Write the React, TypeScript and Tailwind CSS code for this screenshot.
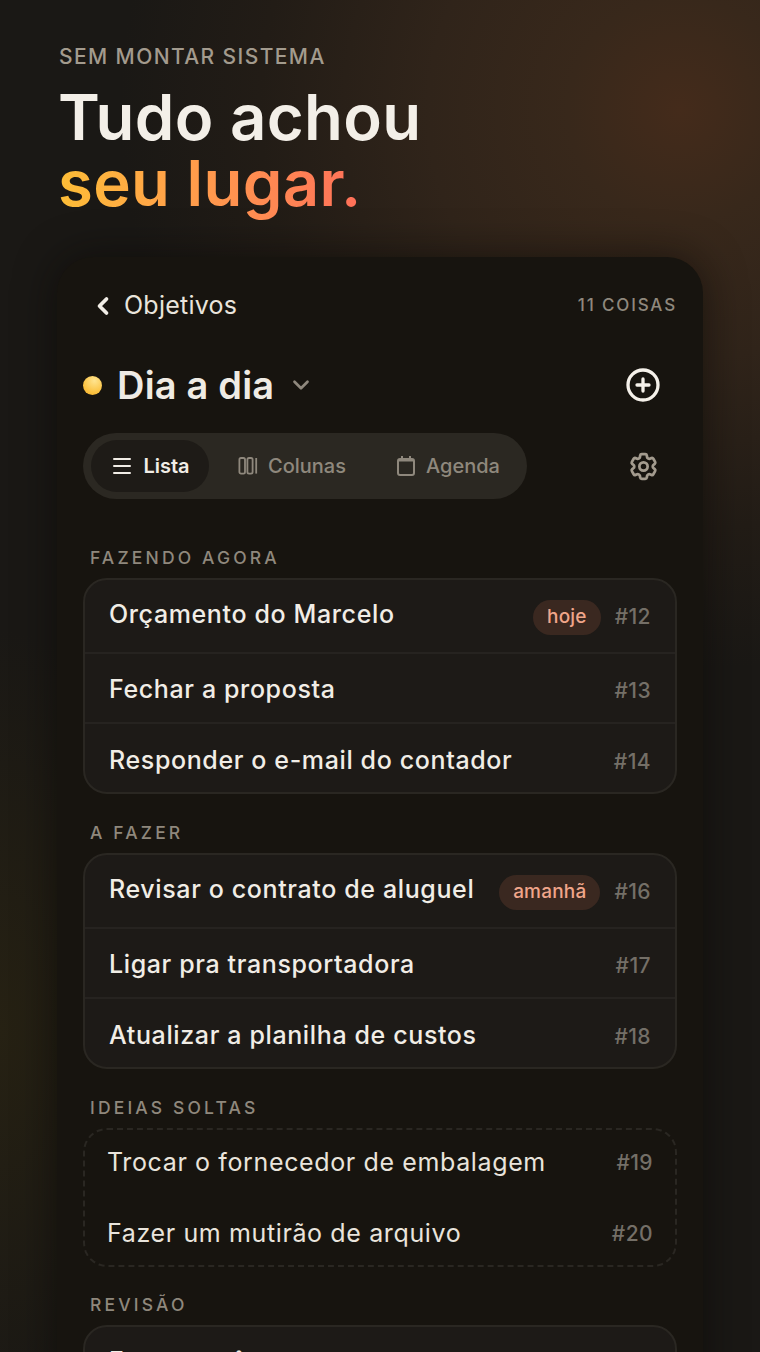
import { ChevronDown, ChevronLeft, Menu, CirclePlus } from 'lucide-react'
import { HiOutlineCog6Tooth } from 'react-icons/hi2'

type Task = { title: string; num: string; tag?: string }

const doing: Task[] = [
  { title: 'Orçamento do Marcelo', num: '#12', tag: 'hoje' },
  { title: 'Fechar a proposta', num: '#13' },
  { title: 'Responder o e-mail do contador', num: '#14' },
]

const todo: Task[] = [
  { title: 'Revisar o contrato de aluguel', num: '#16', tag: 'amanhã' },
  { title: 'Ligar pra transportadora', num: '#17' },
  { title: 'Atualizar a planilha de custos', num: '#18' },
]

const ideas: Task[] = [
  { title: 'Trocar o fornecedor de embalagem', num: '#19' },
  { title: 'Fazer um mutirão de arquivo', num: '#20' },
]

function ColumnsIcon() {
  return (
    <svg width="20" height="20" viewBox="0 0 20 20" fill="none" stroke="currentColor" strokeWidth="1.8">
      <rect x="1.4" y="2" width="5.6" height="15.6" rx="1.6" />
      <rect x="9.4" y="2" width="5.2" height="15.6" rx="1.6" />
      <line x1="18.2" y1="2" x2="18.2" y2="17.6" />
    </svg>
  )
}

function CalendarIcon() {
  return (
    <svg width="20" height="24" viewBox="0 0 20 24" fill="none" stroke="currentColor" strokeWidth="2">
      <rect x="2" y="5" width="16" height="16" rx="2" />
      <line x1="2" y1="6.5" x2="18" y2="6.5" />
      <path d="M6 2v4M14 2v4" />
    </svg>
  )
}

function SectionLabel({ children }: { children: string }) {
  return (
    <div className="ml-[7px] h-[24px] text-[17.5px] leading-[24px] font-medium tracking-[0.18em] text-[#8f887d]">
      {children}
    </div>
  )
}

function TaskRow({ task, index, total }: { task: Task; index: number; total: number }) {
  const rowClass =
    index === 0
      ? 'h-[74px] pt-[2px] border-b-2 border-[#262320]'
      : index === total - 1
        ? 'h-[68px] pt-[8px]'
        : 'h-[70px] pt-[6px] border-b-2 border-[#262320]'
  return (
    <div className={`flex items-center px-[24px] ${rowClass}`}>
      <span className={`flex-1 text-[25px] font-medium tracking-[0.025em] text-[#f1ede6] ${index === 0 ? 'mb-[4px]' : 'mb-[2px]'}`}>
        {task.title}
      </span>
      {task.tag && (
        <span className="mr-[14px] flex h-[35px] items-center rounded-full bg-[#3a2820] px-[14px] text-[19px] font-medium tracking-[0.01em] text-[#f0a58a]">
          {task.tag}
        </span>
      )}
      <span className="text-[21px] font-medium tracking-[0.02em] text-[#746f67]">{task.num}</span>
    </div>
  )
}

function TaskGroup({ tasks }: { tasks: Task[] }) {
  return (
    <div className="mt-[8px] rounded-[24px] border-2 border-[#2a2722] bg-[#1d1a17]">
      {tasks.map((task, i) => (
        <TaskRow key={task.num} task={task} index={i} total={tasks.length} />
      ))}
    </div>
  )
}

export default function App() {
  return (
    <div className="relative h-[1352px] w-[760px] overflow-hidden bg-[#1a1815] font-['Inter',sans-serif] bg-[radial-gradient(circle_560px_at_680px_110px,#442b1b_0%,#38281b_20%,#30241a_45%,#221c16_75%,transparent_100%),radial-gradient(ellipse_200px_400px_at_0px_1030px,#262113_0%,transparent_100%)]">
      <div className="px-[59px] pt-[44px]">
        <div className="text-[21px] leading-[26px] font-medium tracking-[0.067em] text-[#a39b8e]">SEM MONTAR SISTEMA</div>
        <h1 className="ml-[-1px] mt-[14px] text-[63.5px] leading-[66px] font-semibold tracking-[0.005em] text-[#f3efe8]">
          Tudo achou
          <br />
          <span className="bg-gradient-to-r from-[#fdbd36] to-[#ff6f59] bg-clip-text text-transparent">seu lugar.</span>
        </h1>
      </div>

      <div className="ml-[57px] mt-[41px] w-[646px] rounded-t-[36px] bg-[#17140f] px-[26px] pt-[31px] shadow-[0_0_40px_rgba(10,8,6,0.6)]">
        <div className="flex h-[36px] items-center justify-between">
          <div className="flex items-center gap-[7px] pl-[6px] text-[25px] tracking-[0.01em] text-[#e9e4dc]">
            <ChevronLeft size={28} strokeWidth={3.2} className="text-[#f1ede6]" />
            Objetivos
          </div>
          <span className="text-[17px] font-medium tracking-[0.108em] text-[#8f887d]">11 COISAS</span>
        </div>

        <div className="mt-[34px] flex h-[54px] items-center">
          <span className="h-[19px] w-[19px] rounded-full bg-[radial-gradient(circle_at_60%_25%,#ffe48f_0%,#fbc445_60%,#f5ad24_100%)]" />
          <span className="ml-[15px] text-[38px] font-semibold tracking-[0.005em] text-[#efebe4]">Dia a dia</span>
          <ChevronDown size={26} strokeWidth={2.5} className="ml-[14px] text-[#8f887d]" />
          <CirclePlus size={36} strokeWidth={2.2} className="ml-auto mr-[16px] text-[#f5f1ea]" />
        </div>

        <div className="mt-[21px] flex h-[66px] items-center">
          <div className="flex h-[66px] w-[444px] items-center rounded-full bg-[#2b2822] pl-[8px] text-[20px] font-medium text-[#8f887d]">
            <div className="flex h-[52px] w-[118px] items-center justify-center gap-[9px] rounded-full bg-[#1e1b17] font-semibold text-[#f1ede6]">
              <Menu size={24} strokeWidth={2} />
              Lista
            </div>
            <div className="ml-[29px] flex items-center gap-[10px]">
              <ColumnsIcon />
              Colunas
            </div>
            <div className="ml-[50px] flex items-center gap-[10px]">
              <CalendarIcon />
              Agenda
            </div>
          </div>
          <HiOutlineCog6Tooth size={33} strokeWidth={2} className="ml-auto mr-[17px] text-[#a39b8e]" />
        </div>

        <div className="mt-[47px]">
          <SectionLabel>FAZENDO AGORA</SectionLabel>
          <TaskGroup tasks={doing} />
        </div>

        <div className="mt-[27px]">
          <SectionLabel>A FAZER</SectionLabel>
          <TaskGroup tasks={todo} />
        </div>

        <div className="mt-[27px]">
          <SectionLabel>IDEIAS SOLTAS</SectionLabel>
          <div className="mt-[8px] flex h-[139px] flex-col gap-[35px] rounded-[24px] border-2 border-dashed border-[#2a2722] px-[22px] pt-[15px]">
            {ideas.map((task) => (
              <div key={task.num} className="flex h-[36px] items-center">
                <span className="flex-1 text-[25px] tracking-[0.025em] text-[#e9e4dc]">{task.title}</span>
                <span className="text-[21px] font-medium tracking-[0.02em] text-[#746f67]">{task.num}</span>
              </div>
            ))}
          </div>
        </div>

        <div className="mt-[26px]">
          <SectionLabel>REVISÃO</SectionLabel>
          <TaskGroup tasks={[{ title: 'Fazer o mês', num: '#21' }]} />
        </div>
      </div>
    </div>
  )
}
